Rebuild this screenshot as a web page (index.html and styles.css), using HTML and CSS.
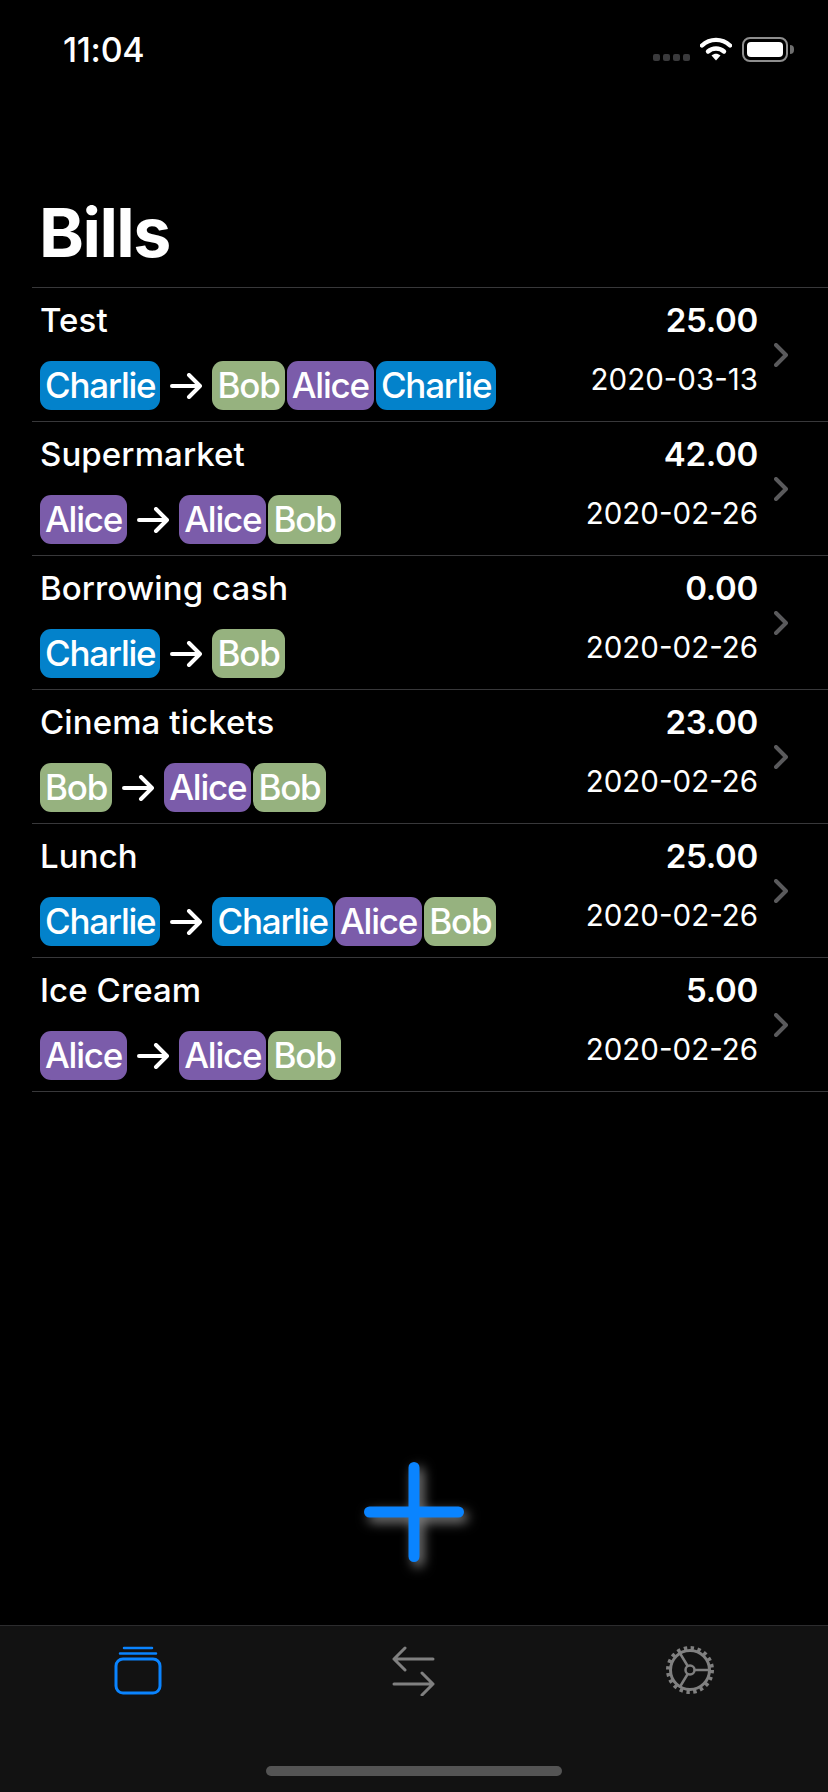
FILE: index.html
```html
<!DOCTYPE html>
<html lang="en">
<head>
    <meta charset="UTF-8">
    <title>Bills</title>
    <meta name="viewport" content="width=device-width, initial-scale=1">
    <link rel="stylesheet" href="styles.css">
</head>
<body>
    <svg class="defs" width="0" height="0">
        <symbol id="arrow" viewBox="0 0 32 26">
            <path d="M2 13H30M19 2L30 13L19 24" fill="none" stroke="currentColor" stroke-width="4" stroke-linecap="round" stroke-linejoin="round"/>
        </symbol>
        <symbol id="chevron" viewBox="0 0 14 24">
            <path d="M2 2L12 12L2 22" fill="none" stroke="currentColor" stroke-width="4" stroke-linecap="round" stroke-linejoin="round"/>
        </symbol>
    </svg>

    <div class="status">
        <span class="time">11:04</span>
        <div class="status-icons">
            <div class="signal"><i></i><i></i><i></i><i></i></div>
            <svg class="wifi" width="32" height="24" viewBox="0 0 32 24">
                <path d="M2 8.500C10 1 22 1 30 8.500" fill="none" stroke="#fff" stroke-width="4.400" stroke-linecap="round"/>
                <path d="M8 14.500C12.500 10.500 19.500 10.500 24 14.500" fill="none" stroke="#fff" stroke-width="4.400" stroke-linecap="round"/>
                <path d="M11.500 18.500C14.500 16 17.500 16 20.500 18.500L16 23.500Z" fill="#fff"/>
            </svg>
            <div class="battery"><div class="battery-fill"></div></div>
            <div class="battery-nub"></div>
        </div>
    </div>

    <h1>Bills</h1>

    <div class="bills">
        <div class="bill">
            <div class="bill-main">
                <div class="bill-name">Test</div>
                <div class="bill-people">
                    <span class="tag charlie">Charlie</span>
                    <svg class="arrow"><use href="#arrow"/></svg>
                    <span class="tag bob">Bob</span>
                    <span class="tag alice">Alice</span>
                    <span class="tag charlie">Charlie</span>
                </div>
            </div>
            <div class="bill-side">
                <div class="amount">25.00</div>
                <div class="date">2020-03-13</div>
            </div>
            <svg class="chevron"><use href="#chevron"/></svg>
        </div>
        <div class="bill">
            <div class="bill-main">
                <div class="bill-name">Supermarket</div>
                <div class="bill-people">
                    <span class="tag alice">Alice</span>
                    <svg class="arrow"><use href="#arrow"/></svg>
                    <span class="tag alice">Alice</span>
                    <span class="tag bob">Bob</span>
                </div>
            </div>
            <div class="bill-side">
                <div class="amount">42.00</div>
                <div class="date">2020-02-26</div>
            </div>
            <svg class="chevron"><use href="#chevron"/></svg>
        </div>
        <div class="bill">
            <div class="bill-main">
                <div class="bill-name">Borrowing cash</div>
                <div class="bill-people">
                    <span class="tag charlie">Charlie</span>
                    <svg class="arrow"><use href="#arrow"/></svg>
                    <span class="tag bob">Bob</span>
                </div>
            </div>
            <div class="bill-side">
                <div class="amount">0.00</div>
                <div class="date">2020-02-26</div>
            </div>
            <svg class="chevron"><use href="#chevron"/></svg>
        </div>
        <div class="bill">
            <div class="bill-main">
                <div class="bill-name">Cinema tickets</div>
                <div class="bill-people">
                    <span class="tag bob">Bob</span>
                    <svg class="arrow"><use href="#arrow"/></svg>
                    <span class="tag alice">Alice</span>
                    <span class="tag bob">Bob</span>
                </div>
            </div>
            <div class="bill-side">
                <div class="amount">23.00</div>
                <div class="date">2020-02-26</div>
            </div>
            <svg class="chevron"><use href="#chevron"/></svg>
        </div>
        <div class="bill">
            <div class="bill-main">
                <div class="bill-name">Lunch</div>
                <div class="bill-people">
                    <span class="tag charlie">Charlie</span>
                    <svg class="arrow"><use href="#arrow"/></svg>
                    <span class="tag charlie">Charlie</span>
                    <span class="tag alice">Alice</span>
                    <span class="tag bob">Bob</span>
                </div>
            </div>
            <div class="bill-side">
                <div class="amount">25.00</div>
                <div class="date">2020-02-26</div>
            </div>
            <svg class="chevron"><use href="#chevron"/></svg>
        </div>
        <div class="bill">
            <div class="bill-main">
                <div class="bill-name">Ice Cream</div>
                <div class="bill-people">
                    <span class="tag alice">Alice</span>
                    <svg class="arrow"><use href="#arrow"/></svg>
                    <span class="tag alice">Alice</span>
                    <span class="tag bob">Bob</span>
                </div>
            </div>
            <div class="bill-side">
                <div class="amount">5.00</div>
                <div class="date">2020-02-26</div>
            </div>
            <svg class="chevron"><use href="#chevron"/></svg>
        </div>
    </div>

    <div class="add">
        <svg class="add-icon" width="100" height="100" viewBox="0 0 100 100">
            <path d="M5.500 50H94.500M50 5.500V94.500" fill="none" stroke="#0a84ff" stroke-width="11" stroke-linecap="round"/>
        </svg>
    </div>

    <div class="tabbar">
        <div class="tabs">
            <div class="tab active">
                <svg width="48" height="50" viewBox="0 0 48 50">
                    <path d="M10 2H38M6 7.500H42" fill="none" stroke="currentColor" stroke-width="2.500" stroke-linecap="round"/>
                    <rect x="2" y="13" width="44" height="34" rx="7" fill="none" stroke="currentColor" stroke-width="3"/>
                </svg>
            </div>
            <div class="tab">
                <svg width="48" height="50" viewBox="0 0 48 50">
                    <path d="M4 13H43M15 2L4 13L15 24M4 38H43M32 27L43 38L32 49" fill="none" stroke="currentColor" stroke-width="3" stroke-linecap="round" stroke-linejoin="round"/>
                </svg>
            </div>
            <div class="tab">
                <svg class="gear" width="52" height="52" viewBox="0 0 52 52">
                    <circle cx="26" cy="26" r="19.500" fill="none" stroke="currentColor" stroke-width="3"/>
                    <circle cx="26" cy="26" r="22" fill="none" stroke="currentColor" stroke-width="4" stroke-dasharray="3.400 3.511"/>
                    <circle cx="26" cy="26" r="4.500" fill="none" stroke="currentColor" stroke-width="2.500"/>
                    <path d="M30.500 26H45M23.700 22L15.500 8.500M23.700 30L15.500 43.500" fill="none" stroke="currentColor" stroke-width="2.500"/>
                </svg>
            </div>
        </div>
        <div class="home-bar"></div>
    </div>
</body>
</html>
```

FILE: styles.css
```css
:root {
    --bg: #000000;
    --text: #ffffff;
    --line: #38383a;
    --muted: #808080;
    --blue: #0a84ff;
}

* {
    box-sizing: border-box;
}

body {
    background: var(--bg);
    color: var(--text);
    font-family: Inter, "Liberation Sans", sans-serif;
    margin: 0;
    height: 1792px;
    overflow: hidden;
    display: flex;
    flex-direction: column;
}

.defs {
    display: none;
}

/* status bar */
.status {
    display: flex;
    justify-content: space-between;
    padding: 30px 34px 0 63px;
    height: 100px;
}

.time {
    font-size: 34px;
    font-weight: 500;
    line-height: 40px;
    letter-spacing: -0.3px;
}

.status-icons {
    display: flex;
    align-items: flex-start;
    padding-top: 7px;
}

.signal {
    display: flex;
    gap: 3px;
    margin: 17px 10px 0 0;
}

.signal i {
    width: 7px;
    height: 7px;
    border-radius: 2px;
    background: #3a3a3c;
}

.battery {
    width: 46px;
    height: 25px;
    margin-left: 10px;
    padding: 3px;
    border: 2px solid #8e8e8e;
    border-radius: 8px;
}

.battery-fill {
    height: 100%;
    background: #fff;
    border-radius: 4px;
}

.battery-nub {
    width: 4px;
    height: 9px;
    margin: 8px 0 0 2px;
    background: #6e6e6e;
    border-radius: 0 4px 4px 0;
}

h1 {
    margin: 0;
    padding-left: 39px;
    height: 187px;
    padding-top: 92px;
    font-size: 68px;
    line-height: 80px;
    font-weight: 700;
    letter-spacing: -1.5px;
}

/* list */
.bills {
    margin-left: 32px;
    border-top: 1px solid var(--line);
}

.bill {
    display: flex;
    align-items: flex-start;
    height: 134px;
    padding: 10px 0 0 8px;
    border-bottom: 1px solid var(--line);
}

.bill-main {
    flex: 1;
}

.bill-name {
    font-size: 33px;
    line-height: 44px;
    font-weight: 500;
    letter-spacing: 0.1px;
}

.bill-people {
    display: flex;
    align-items: center;
    gap: 2px;
    margin-top: 19px;
}

.tag {
    height: 49px;
    padding: 0 5px;
    border-radius: 11px;
    font-size: 35px;
    font-weight: 500;
    line-height: 48px;
    letter-spacing: -1.2px;
}

.charlie {
    background: #0382cb;
}

.bob {
    background: #96b27f;
}

.alice {
    background: #7b5caa;
}

.arrow {
    width: 32px;
    height: 26px;
    margin: 0 8px;
    color: var(--text);
}

.bill-side {
    text-align: right;
}

.amount {
    font-size: 33px;
    line-height: 44px;
    font-weight: 600;
    letter-spacing: -0.3px;
}

.date {
    margin-top: 17px;
    font-size: 29.500px;
    line-height: 40px;
    font-weight: 400;
}

.chevron {
    width: 14px;
    height: 24px;
    margin: 45px 40px 0 16px;
    color: #5a5a5c;
}

/* add button */
.add {
    flex: 1;
    display: flex;
    justify-content: center;
    align-items: flex-end;
    padding-bottom: 63px;
}

.add-icon {
    filter: drop-shadow(4px 5px 6px rgba(255, 255, 255, 0.5));
}

/* tab bar */
.tabbar {
    height: 167px;
    background: #121212;
    border-top: 1px solid #2c2c2e;
    display: flex;
    flex-direction: column;
    align-items: center;
}

.tabs {
    width: 100%;
    display: grid;
    grid-template-columns: repeat(3, 1fr);
    padding-top: 20px;
}

.tab {
    display: flex;
    justify-content: center;
    color: var(--muted);
}

.tab.active {
    color: var(--blue);
}

.gear {
    margin-top: -2px;
}

.home-bar {
    width: 296px;
    height: 10px;
    margin-top: auto;
    margin-bottom: 16px;
    border-radius: 5px;
    background: #545454;
}
```
